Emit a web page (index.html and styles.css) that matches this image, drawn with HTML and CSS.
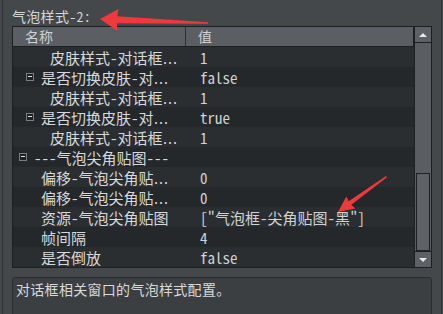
FILE: index.html
```html
<!DOCTYPE html>
<html lang="zh">
<head>
    <meta charset="UTF-8">
    <title>气泡样式</title>
    <link rel="stylesheet" href="styles.css">
</head>
<body>
    <div class="panel">
        <div class="title">气泡样式-2:</div>
        <div class="table">
            <div class="grid">
                <div class="head">
                    <div class="hname">名称</div>
                    <div class="hval">值</div>
                </div>
                <div class="row">
                    <div class="name leaf">皮肤样式-对话框<span class="el">…</span></div>
                    <div class="val">1</div>
                </div>
                <div class="row">
                    <div class="name sub"><span class="box"></span>是否切换皮肤-对<span class="el">…</span></div>
                    <div class="val">false</div>
                </div>
                <div class="row">
                    <div class="name leaf">皮肤样式-对话框<span class="el">…</span></div>
                    <div class="val">1</div>
                </div>
                <div class="row">
                    <div class="name sub"><span class="box"></span>是否切换皮肤-对<span class="el">…</span></div>
                    <div class="val">true</div>
                </div>
                <div class="row">
                    <div class="name leaf">皮肤样式-对话框<span class="el">…</span></div>
                    <div class="val">1</div>
                </div>
                <div class="row">
                    <div class="name group"><span class="box"></span>---气泡尖角贴图---</div>
                    <div class="val"></div>
                </div>
                <div class="row">
                    <div class="name item">偏移-气泡尖角贴<span class="el">…</span></div>
                    <div class="val">0</div>
                </div>
                <div class="row">
                    <div class="name item">偏移-气泡尖角贴<span class="el">…</span></div>
                    <div class="val">0</div>
                </div>
                <div class="row">
                    <div class="name item">资源-气泡尖角贴图</div>
                    <div class="val">["气泡框-尖角贴图-黑"]</div>
                </div>
                <div class="row">
                    <div class="name item">帧间隔</div>
                    <div class="val">4</div>
                </div>
                <div class="row">
                    <div class="name item">是否倒放</div>
                    <div class="val">false</div>
                </div>
            </div>
            <div class="scroll">
                <div class="sbtn up"></div>
                <div class="track"><div class="thumb"></div></div>
                <div class="sbtn down"></div>
            </div>
        </div>
        <div class="desc">对话框相关窗口的气泡样式配置。</div>
    </div>

    <!-- red annotation arrows drawn over the screenshot -->
    <svg class="marks" width="443" height="314" viewBox="0 0 443 314">
        <polygon points="100,19 118.5,9 117.2,16.3 208,22.3 208,23.7 116.8,23.3 117.5,31" />
        <polygon points="338,212 346.3,196.4 348.7,201.2 386,176 387,177.3 351.3,204.8 355.3,208.4" />
    </svg>
</body>
</html>
```

FILE: styles.css
```css
body {
    margin: 0;
    width: 443px;
    height: 314px;
    overflow: hidden;
    position: relative;
    background-color: #45484b;
    color: #d6d9dc;
    font-family: "Noto Sans Mono CJK SC", "Noto Sans CJK SC", monospace;
}
.panel {
    margin: 0 1px 0 2px;
    height: 314px;
    box-sizing: border-box;
    border-left: 1px solid #303336;
    border-right: 1px solid #303336;
    padding: 7px 9px 0 9px;
}
.title {
    font-size: 14px;
    line-height: 18px;
    height: 18px;
    margin-bottom: 1px;
    color: #d4d6d8;
    letter-spacing: 0.3px;
}
.table {
    display: flex;
    border: 1px solid #1d1f21;
    background-color: #2b2e31;
}
.grid {
    width: 401px;
}
.head {
    display: flex;
    height: 19px;
    background-color: #5b5f63;
    border-bottom: 1px solid #1d1f21;
    border-right: 1px solid #1d1f21;
    font-size: 14px;
    line-height: 19px;
    color: #cfd2d5;
}
.hname {
    width: 173px;
    box-sizing: border-box;
    padding-left: 12px;
    border-right: 1px solid #2e3134;
}
.hval {
    padding-left: 12px;
}
.row {
    display: flex;
    height: 20px;
    font-size: 15px;
    line-height: 18px;
    white-space: nowrap;
}
.row:nth-child(odd) {
    background-color: #25282b;
}
.name {
    width: 173px;
    box-sizing: border-box;
    padding-top: 2px;
}
.name.leaf {
    padding-left: 37px;
}
.name.sub {
    padding-left: 13px;
}
.name.group {
    padding-left: 6px;
}
.name.item {
    padding-left: 28px;
}
.val {
    padding: 2px 0 0 14px;
    color: #d0d3d6;
}
.el {
    font-family: "DejaVu Sans", sans-serif;
}
.box {
    display: inline-block;
    width: 6px;
    height: 6px;
    margin-right: 7px;
    vertical-align: 3px;
    border: 1px solid #7a7e82;
    background-color: #1e2022;
    position: relative;
}
.box::after {
    content: "";
    position: absolute;
    left: 1px;
    right: 1px;
    top: 2px;
    height: 1px;
    background-color: #e0e2e4;
}
.scroll {
    width: 16px;
    border-left: 1px solid #1d1f21;
    display: flex;
    flex-direction: column;
    background-color: #5a5e62;
}
.sbtn {
    height: 15px;
    background-color: #5d6165;
    display: flex;
    align-items: center;
    justify-content: center;
}
.sbtn.up {
    border-bottom: 1px solid #1d1f21;
}
.sbtn.down {
    border-top: 1px solid #1d1f21;
}
.sbtn.up::before {
    content: "";
    border-left: 4px solid transparent;
    border-right: 4px solid transparent;
    border-bottom: 4px solid #e8eaec;
}
.sbtn.down::before {
    content: "";
    border-left: 4px solid transparent;
    border-right: 4px solid transparent;
    border-top: 4px solid #e8eaec;
}
.track {
    flex: 1;
    display: flex;
    flex-direction: column;
    justify-content: flex-end;
}
.thumb {
    height: 76px;
    margin: 0 1px;
    border: 1px solid #1f2123;
    background-color: #5e6266;
}
.desc {
    margin-top: 9px;
    height: 40px;
    border: 1px solid #2a2c2e;
    border-radius: 3px;
    background-color: #3c3f42;
    padding: 1px 3px;
    font-size: 14px;
    line-height: 20px;
    color: #d8dadc;
    letter-spacing: 0.3px;
}
.marks {
    position: absolute;
    left: 0;
    top: 0;
    pointer-events: none;
}
.marks polygon {
    fill: #ee3a3c;
}
```
